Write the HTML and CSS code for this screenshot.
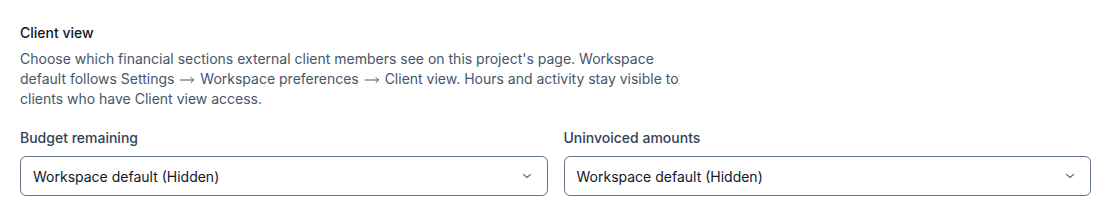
FILE: index.html
```html
<!DOCTYPE html>
<html lang="en">
<head>
    <meta charset="UTF-8">
    <meta name="viewport" content="width=device-width, initial-scale=1.0">
    <title>Client view</title>
    <link rel="stylesheet" href="styles.css">
</head>
<body>
    <section class="client-view">
        <h3 class="section-title">Client view</h3>
        <p class="section-help">Choose which financial sections external client members see on this project's page. Workspace default follows Settings <svg class="arrow" width="18" height="8" viewBox="0 0 18 8" fill="none" aria-label="→"><path d="M2 4h13.5M13 1.5L15.5 4 13 6.5" stroke="#475569" stroke-width="1" stroke-linecap="round" stroke-linejoin="round"/></svg> Workspace preferences <svg class="arrow" width="18" height="8" viewBox="0 0 18 8" fill="none" aria-label="→"><path d="M2 4h13.5M13 1.5L15.5 4 13 6.5" stroke="#475569" stroke-width="1" stroke-linecap="round" stroke-linejoin="round"/></svg> Client view. Hours and activity stay visible to clients who have Client view access.</p>
        <div class="fields">
            <div class="field">
                <label class="field-label" for="budget">Budget remaining</label>
                <div class="select">
                    <span class="select-value" id="budget">Workspace default (Hidden)</span>
                    <svg class="chevron" width="16" height="16" viewBox="0 0 16 16" fill="none">
                        <path d="M4.5 6.5L8 9.5l3.5-3" stroke="#64748b" stroke-width="1.2" stroke-linecap="round" stroke-linejoin="round"/>
                    </svg>
                </div>
            </div>
            <div class="field">
                <label class="field-label" for="uninvoiced">Uninvoiced amounts</label>
                <div class="select">
                    <span class="select-value" id="uninvoiced">Workspace default (Hidden)</span>
                    <svg class="chevron" width="16" height="16" viewBox="0 0 16 16" fill="none">
                        <path d="M4.5 6.5L8 9.5l3.5-3" stroke="#64748b" stroke-width="1.2" stroke-linecap="round" stroke-linejoin="round"/>
                    </svg>
                </div>
            </div>
        </div>
    </section>
</body>
</html>
```

FILE: styles.css
```css
body {
    margin: 0;
    font-family: 'Inter', 'Liberation Sans', sans-serif;
    background-color: #ffffff;
    color: #111827;
}
.client-view {
    padding: 23px 20px 20px;
}
.section-title {
    margin: 0;
    font-size: 14px;
    line-height: 20px;
    font-weight: 500;
    color: #0f172a;
}
.section-help {
    margin: 6px 0 0;
    max-width: 682px;
    font-size: 14px;
    line-height: 20px;
    color: #475569;
}
.section-help .arrow {
    vertical-align: baseline;
}
.fields {
    display: grid;
    grid-template-columns: 1fr 1fr;
    gap: 16px;
    margin-top: 19px;
}
.field-label {
    display: block;
    font-size: 14px;
    line-height: 20px;
    font-weight: 500;
    color: #334155;
    margin-bottom: 8px;
}
.select {
    display: flex;
    align-items: center;
    justify-content: space-between;
    height: 40px;
    box-sizing: border-box;
    padding: 0 12px;
    border: 1px solid #64748b;
    border-radius: 6px;
    background-color: #ffffff;
}
.select-value {
    font-size: 14px;
    color: #0f172a;
}
.chevron {
    flex-shrink: 0;
}
```
